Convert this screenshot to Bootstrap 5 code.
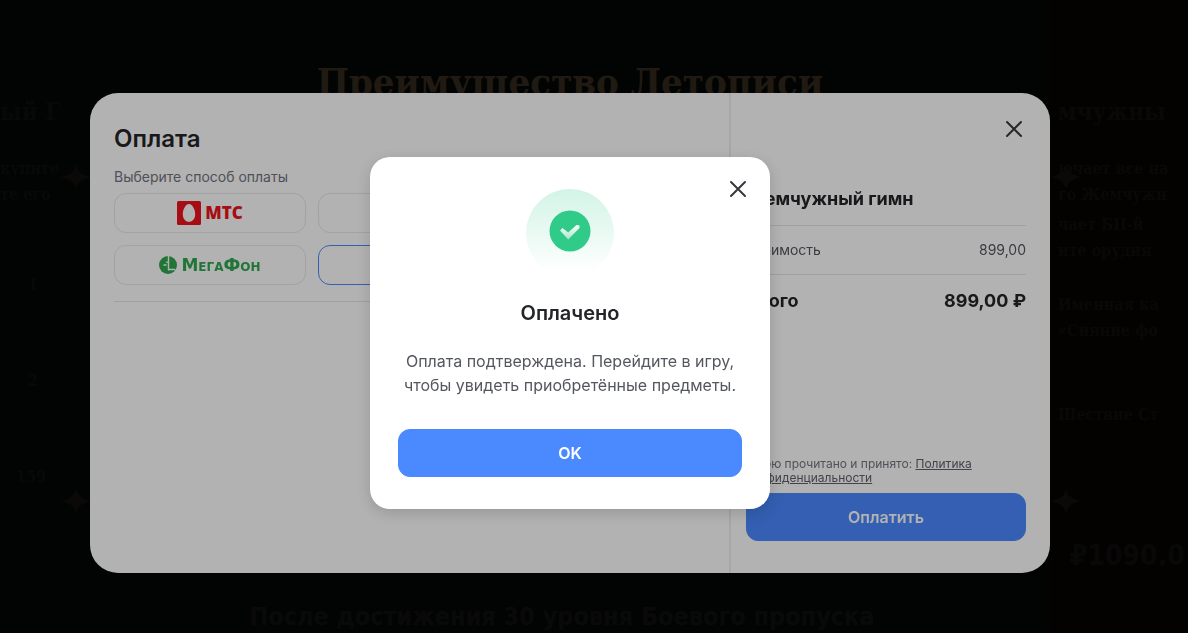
<!DOCTYPE html>
<html lang="ru">
<head>
<meta charset="utf-8">
<meta name="viewport" content="width=device-width, initial-scale=1">
<title>Оплата</title>
<link href="https://cdn.jsdelivr.net/npm/bootstrap@5.3.0/dist/css/bootstrap.min.css" rel="stylesheet">
<style>
  body { font-family: Inter, "Liberation Sans", sans-serif; background: #040605; color: #242529; }
  .landing { color: #0c0c0c; font-family: "DejaVu Serif Condensed", "DejaVu Serif", serif; font-weight: 700; }
  .side { width: 90px; font-size: 16px; line-height: 26px; padding-top: 94px; }
  .side-right { width: 138px; background: #060402; padding-left: 8px; }
  .side-title { font-size: 24px; line-height: 36px; margin-bottom: 26px; }
  .count { padding: 0 0 0 28px; margin-bottom: 70px; }
  .prize { margin-top: 58px; }
  .price { font-size: 28px; line-height: 40px; font-family: "DejaVu Sans Condensed", sans-serif; margin-top: 108px; padding-left: 12px; }
  .hero { font-size: 38px; line-height: 52px; color: #2f261b; padding-top: 56px; }
  .note { font-size: 25px; line-height: 32px; color: #0f0e0d; font-family: "DejaVu Sans Condensed", sans-serif; }
  .star { width: 32px; height: 28px; fill: #110e0b; }
  .star-left { left: 60px; }
  .star-right { left: 0; }
  .star-upper { top: 163px; }
  .star-lower { top: 487px; }
  .layer { padding: 33px 48px 0 0; }
  .dim { background: rgba(0, 0, 0, .3); }
  .pay-panel { width: 960px; min-height: 480px; border-radius: 28px; background: #fff; }
  .pay-side { width: 321px; padding: 24px 24px 32px 15px; border-left: 2px solid #f0f0f0; }
  .pay-main { padding: 31px 15px 24px 24px; }
  .pay-title { font-size: 24px; line-height: 30px; font-weight: 600; }
  .hint { font-size: 14px; line-height: 20px; color: #72757f; margin: 13px 0 6px; }
  .methods { display: grid; grid-template-columns: repeat(3, 1fr); gap: 12px; }
  .method { height: 40px; border: 1px solid #e8e8ea; border-radius: 12px; background: none; padding: 0; }
  .method.active { border-color: #4b89ff; }
  .mts { color: #f0141e; font: 800 17px/24px "Open Sans", sans-serif; }
  .megafon { color: #30a84f; font: 700 17px/20px "DejaVu Sans", sans-serif; font-variant: small-caps; }
  .rule { border-top: 1px solid #e6e6e8; }
  .x-btn { width: 24px; height: 24px; padding: 0; border: 0; background: none; color: #36383e; line-height: 0; }
  .item { font-size: 18px; line-height: 24px; font-weight: 700; }
  .item-name { margin: 46px 0 14px; }
  .item-total { margin-top: 14px; }
  .cost { font-size: 14px; line-height: 20px; color: #55575f; padding: 14px 0; }
  .legal { font-size: 12px; line-height: 14px; color: #72757f; }
  .legal a { color: #5f626b; }
  .main-btn { --bs-btn-color: #fff; --bs-btn-bg: #4b89ff; --bs-btn-border-color: #4b89ff; --bs-btn-hover-bg: #3b79ef; --bs-btn-hover-color: #fff; height: 48px; border-radius: 12px; font-weight: 600; font-size: 16px; line-height: 24px; }
  .notice { width: 400px; border-radius: 20px; background: #fff; padding: 32px 28px; box-shadow: 0 4px 16px rgba(0, 0, 0, .16); }
  .notice-close { top: 20px; right: 20px; }
  .notice-title { font-size: 20px; line-height: 24px; font-weight: 600; margin-top: 24px; }
  .notice-text { font-size: 16px; line-height: 24px; color: #55575f; margin: 24px -4px 32px; }
</style>
</head>
<body>
<main class="landing d-flex justify-content-between vh-100 overflow-hidden">
  <aside class="side position-relative text-nowrap overflow-hidden">
    <div class="side-title">ый Г</div>
    <div>купите</div>
    <div class="mb-5 pb-3">те его</div>
    <div class="count">1</div>
    <div class="count">2</div>
    <div class="ps-3">159</div>
    <svg class="star star-left star-upper position-absolute" viewBox="0 0 32 28" aria-hidden="true"><path d="M16 2q2 10 16 12-14 2-16 12-2-10-16-12 14-2 16-12z"/></svg>
    <svg class="star star-left star-lower position-absolute" viewBox="0 0 32 28" aria-hidden="true"><path d="M16 2q2 10 16 12-14 2-16 12-2-10-16-12 14-2 16-12z"/></svg>
  </aside>
  <section class="d-flex flex-column justify-content-between align-items-center text-nowrap">
    <h1 class="hero fw-bold m-0">Преимущество Летописи</h1>
    <p class="note mb-0 me-3">После достижения 30 уровня Боевого пропуска</p>
  </section>
  <aside class="side side-right position-relative text-nowrap overflow-hidden">
    <div class="side-title">мчужны</div>
    <div>ючает все на</div>
    <div class="mb-1">го Жемчужн</div>
    <div>чает БП-й</div>
    <div class="mb-4 pb-1">ите орудия</div>
    <div>Именная ка</div>
    <div>«Сияние фо</div>
    <div class="prize">Шествие Ст</div>
    <div class="price">₽1090.0</div>
    <svg class="star star-right star-upper position-absolute" viewBox="0 0 32 28" aria-hidden="true"><path d="M16 2q2 10 16 12-14 2-16 12-2-10-16-12 14-2 16-12z"/></svg>
    <svg class="star star-right star-lower position-absolute" viewBox="0 0 32 28" aria-hidden="true"><path d="M16 2q2 10 16 12-14 2-16 12-2-10-16-12 14-2 16-12z"/></svg>
  </aside>
</main>

<div class="layer position-fixed top-0 start-0 w-100 h-100 d-flex align-items-center justify-content-center">
  <section class="pay-panel d-flex" role="dialog" aria-labelledby="pay-title">
    <div class="pay-main flex-grow-1">
      <h2 class="pay-title m-0" id="pay-title">Оплата</h2>
      <p class="hint">Выберите способ оплаты</p>
      <div class="methods">
        <button type="button" class="method d-flex align-items-center justify-content-center gap-1">
          <svg width="24" height="24" viewBox="0 0 24 24" aria-hidden="true"><rect width="24" height="24" rx="1.5" fill="#f0141e"/><path d="M12 3c-3 0-6.200 5-6.200 10 0 4.600 2.400 7.800 6.200 7.800s6.200-3.200 6.200-7.800c0-5-3.200-10-6.200-10z" fill="#fff"/></svg>
          <span class="mts">МТС</span>
        </button>
        <button type="button" class="method" aria-label="Способ 2"></button>
        <button type="button" class="method" aria-label="Способ 3"></button>
        <button type="button" class="method d-flex align-items-center justify-content-center gap-1">
          <svg width="18" height="18" viewBox="0 0 18 18" aria-hidden="true"><circle cx="9" cy="9" r="9" fill="#30a84f"/><path d="M9.500 0v14.500M9.500 13.500h6.500" stroke="#fff" stroke-width="1.400" fill="none"/><path d="M4.500 9h3M8 5.500v1.500" stroke="#fff" stroke-width="1.600" fill="none"/></svg>
          <span class="megafon">МегаФон</span>
        </button>
        <button type="button" class="method active" aria-label="Способ 5"></button>
        <button type="button" class="method" aria-label="Способ 6"></button>
      </div>
      <div class="rule mt-3"></div>
    </div>
    <div class="pay-side d-flex flex-column">
      <button type="button" class="x-btn align-self-end" aria-label="Закрыть оплату"><svg width="24" height="24" viewBox="0 0 24 24" fill="none" stroke="currentColor" stroke-width="2" stroke-linecap="round"><path d="M5 5l14 14M19 5L5 19"/></svg></button>
      <h3 class="item item-name">Жемчужный гимн</h3>
      <div class="rule"></div>
      <div class="cost d-flex justify-content-between"><span>Стоимость</span><span>899,00</span></div>
      <div class="rule"></div>
      <div class="item item-total d-flex justify-content-between"><span>Итого</span><span>899,00 ₽</span></div>
      <p class="legal mt-auto mb-2">Мною прочитано и принято: <a href="#">Политика конфиденциальности</a></p>
      <button type="button" class="btn main-btn w-100">Оплатить</button>
    </div>
  </section>
</div>

<div class="layer dim position-fixed top-0 start-0 w-100 h-100 d-flex align-items-center justify-content-center">
  <section class="notice position-relative text-center" role="alertdialog" aria-labelledby="notice-title">
    <button type="button" class="x-btn notice-close position-absolute" aria-label="Закрыть"><svg width="24" height="24" viewBox="0 0 24 24" fill="none" stroke="currentColor" stroke-width="2" stroke-linecap="round"><path d="M5 5l14 14M19 5L5 19"/></svg></button>
    <svg class="d-block mx-auto" width="88" height="88" viewBox="0 0 88 88" aria-hidden="true">
      <defs>
        <linearGradient id="halo" x1="0" y1="0" x2="0" y2="1"><stop stop-color="#d2f4e5"/><stop offset=".95" stop-color="#fff"/></linearGradient>
        <linearGradient id="tick" x1="0" y1="0" x2="0" y2="1"><stop stop-color="#fff"/><stop offset="1" stop-color="#a5e5c8"/></linearGradient>
      </defs>
      <circle cx="44" cy="44" r="44" fill="url(#halo)"/>
      <circle cx="44" cy="42" r="20.500" fill="#30ca89"/>
      <path d="M34 41.500l2.500-2.500 5.700 4.500 8.300-7.500 3 .500v2.500l-11.300 11.500z" fill="url(#tick)"/>
    </svg>
    <h2 class="notice-title mb-0" id="notice-title">Оплачено</h2>
    <p class="notice-text">Оплата подтверждена. Перейдите в игру, чтобы увидеть приобретённые предметы.</p>
    <button type="button" class="btn main-btn w-100">OK</button>
  </section>
</div>
<script src="https://cdn.jsdelivr.net/npm/bootstrap@5.3.0/dist/js/bootstrap.bundle.min.js"></script>
</body>
</html>
